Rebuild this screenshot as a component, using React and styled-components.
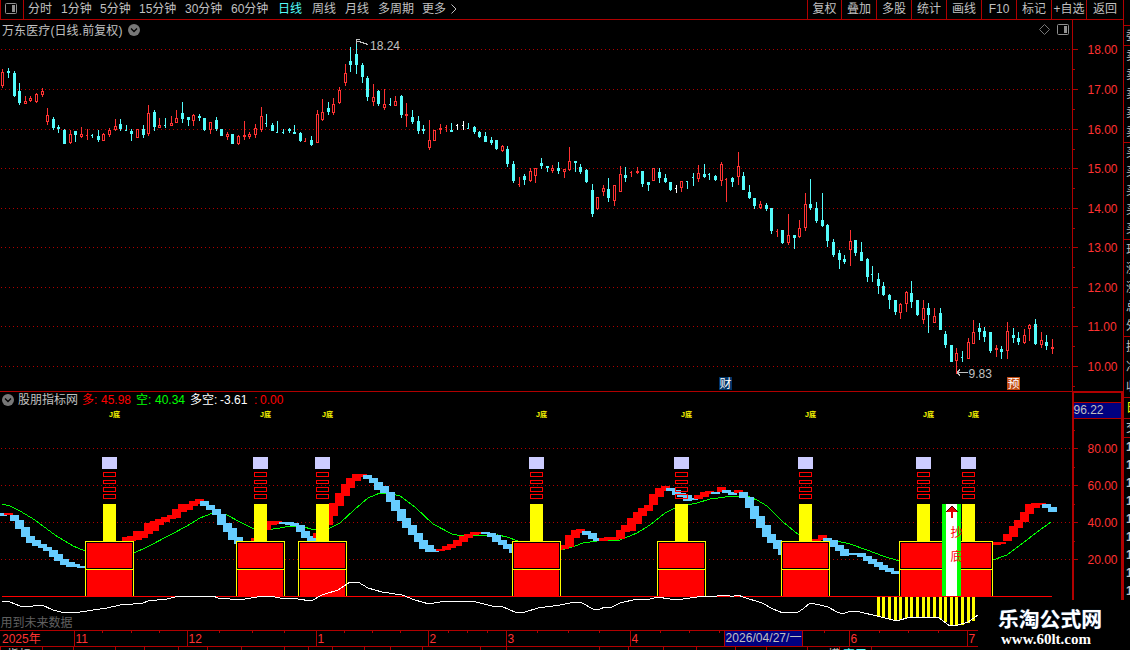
import React from "react";
import styled, { createGlobalStyle } from "styled-components";

const colors = {
  line: "#b00000",
  red: "#ff3232",
  cyan: "#54fcfc",
  text: "#c0c0c0",
  pureRed: "#ff0000",
  green: "#00ff00",
  yellow: "#ffff00",
  sky: "#66ccff",
  navy: "#000080",
};

const periods = [
  ["分时", 33],
  ["1分钟", 39],
  ["5分钟", 39],
  ["15分钟", 46],
  ["30分钟", 46],
  ["60分钟", 47],
  ["日线", 34],
  ["周线", 33],
  ["月线", 33],
  ["多周期", 44],
  ["更多", 29],
];

const actions = [
  ["复权", 34],
  ["叠加", 35],
  ["多股", 35],
  ["统计", 35],
  ["画线", 35],
  ["F10", 35],
  ["标记", 35],
  ["+自选", 35],
  ["返回", 37],
];

// type, high, low, body top, body bottom
const candles = `r69,88,72,86 c68,78,71,73 c71,97,73,96 c83,105,91,103 r96,104,101,104 r96,102,98,101
r93,103,94,102 r88,97,91,95 r108,125,115,122 c117,130,119,128 c125,133,127,129 c129,144,130,144
r130,144,134,143 c131,142,131,135 r127,138,134,137 r129,140,135,136 c134,138,135,136 c130,142,136,140
r133,141,134,141 r128,137,130,135 r119,131,126,130 c119,131,124,129 c125,131,130,131 c129,141,131,134
r129,138,129,138 c125,138,129,135 r105,136,113,134 c110,131,112,127 r118,128,125,128 c118,128,125,126
r116,126,123,126 r110,123,118,123 c102,123,113,119 c117,126,117,120 r114,126,115,121 c114,121,116,118
c118,131,118,130 r122,134,122,130 c117,131,120,129 c129,136,129,136 r132,140,134,137 c134,144,134,144
r135,145,136,144 r121,140,135,137 r132,139,134,137 r124,138,128,135 r107,132,116,130 c114,127,123,124
c123,131,125,131 c121,133,132,133 c129,134,132,133 c128,133,129,131 c125,134,132,134 c132,142,133,141
r138,142,141,142 c136,146,140,145 r110,143,114,143 r99,121,112,120 c102,115,108,112 r98,115,104,113
r87,104,90,103 r64,86,73,83 c47,72,61,65 c40,74,54,65 c63,83,65,77 c76,101,78,97
r84,106,97,102 c90,106,91,104 r89,110,104,108 c98,106,104,105 r96,106,101,106 c95,118,96,115
r103,127,114,116 c110,124,117,122 c116,134,121,131 c125,134,129,131 r120,150,140,148 r130,141,130,141
r124,134,128,130 r125,132,127,128 c123,132,130,132 w124,130,125,126 w121,130,125,126 c123,129,128,129
c126,134,127,132 c131,138,132,137 c132,142,136,142 c137,145,140,143 c140,150,140,149 r145,152,146,151
c146,167,149,164 c161,183,164,181 r177,187,184,185 c174,185,176,180 r168,182,171,181 r168,183,168,176
c158,169,163,166 c166,172,166,168 r165,173,168,171 c162,174,168,171 r169,178,169,172 r147,171,161,170
c161,172,161,163 c164,174,167,172 c169,183,170,182 c184,217,190,214 r197,210,197,209 r185,196,188,192
c178,202,189,198 r185,206,185,201 r166,192,174,192 c167,182,175,178 r171,177,172,173 r167,174,171,173
c171,187,171,184 c182,191,182,185 r168,181,168,181 c168,183,172,178 c174,183,178,182 c182,191,182,190
w185,193,188,189 r181,192,181,188 c181,189,181,182 c173,186,177,178 r165,182,173,179 c164,178,174,177
c173,180,174,175 c175,181,176,180 r162,186,164,181 r178,202,179,180 c177,187,178,182 r152,185,166,177
c172,190,176,190 c185,199,192,198 c198,209,198,206 r201,209,204,208 c203,211,205,209 c208,234,208,231
r229,237,231,232 c230,244,230,243 r214,245,235,243 c235,249,235,238 r220,238,228,237 r193,231,204,228
c179,210,204,208 c202,223,208,221 c193,227,220,226 c224,247,225,241 c239,257,242,255 c250,269,253,260
c255,264,259,262 r230,266,241,250 c240,256,240,253 c242,261,252,261 c258,282,259,277 c266,282,274,275
c273,294,279,286 c282,296,286,295 c294,309,295,300 c300,315,300,312 r303,319,304,313 r291,312,292,304
c281,308,293,302 c300,316,300,315 r300,324,308,320 c303,333,308,315 r308,323,316,323 c308,330,313,330
c331,348,334,345 c345,362,345,362 r348,374,353,361 c351,362,357,358 r338,359,342,359 r320,344,332,344
c323,340,328,332 c327,342,331,337 c332,353,332,351 r345,357,348,350 c346,359,349,352 r322,359,331,351
c328,343,335,338 c332,345,338,342 r329,344,335,343 r324,341,325,329 c319,345,324,344 r332,348,340,345
c335,350,342,346 r339,354,347,349`
  .split(/\s+/)
  .map((item) => [item[0], ...item.slice(1).split(",").map(Number)]);

// runs of the 多 ribbon: first bar index, then type + top-bottom per bar
const ribbonRuns = [
  [0, "b513-516 r513-515 b515-521 b520-529 b527-537 b536-543 b540-546 b544-548 b547-551 b550-557 b554-561 b559-565 b562-567 b564-567 b566-568"],
  [22, "r537-541 r536-541 r531-540 r531-538 r523-534 r521-531 r519-525 r517-522 r515-519 r509-518 r504-512 r504-510 r501-506 r499-504 b501-506 b505-510 b509-515 b514-525 b523-532 b528-540 b537-544"],
  [45, "r538-541 r529-539 r521-530 r521-525 r521-524 b522-524 b522-525 b523-526 b525-532 b531-538 b536-541 r533-538 r525-534 r516-525 r503-516 r493-506 r484-496 r478-488 r474-481 r474-477 b475-479 b478-483 b482-490 b486-493 b492-502 b500-511 b509-521 b518-528 b525-535 b533-542 b540-549 b545-552 b549-552"],
  [78, "r549-551 r546-550 r544-548 r540-546 r536-542 r534-538 r532-535 r532-534 b532-534 b533-537 b535-542 b540-545 b544-549 b548-553"],
  [99, "r546-550 r545-549 r535-547 r530-538 r529-533 b531-535 b533-539 b538-541 r538-541 r537-540 r537-540 r530-539 r525-532 r518-531 r512-524 r508-516 r505-511 r494-505 r488-497 r486-491 b488-491 b490-495 b493-497 b495-501 b498-500 r495-499 r492-497 r491-494 b492-494 r487-492 b490-493 b492-495 r490-493 b492-498 b497-508 b506-519 b516-528 b525-537 b534-543 b540-549 b547-555"],
  [145, "r539-541 r535-540 b538-542 b540-547 b545-551 b549-556 b553-555 b553-555 b553-557 b556-561 b559-564 b562-567 b565-570 b568-572 b571-574"],
  [177, "r542-545 r542-544 r534-541 r526-537 r520-528 r512-522 r504-514 r503-508 r503-505 b504-508 b507-512"],
];

const greenLines = [
  "2,504 10,506 20,511 35,520 55,535 73,546 85,551",
  "134,553 147,547 170,535 187,526 200,518 213,513 227,515 240,522 252,528 267,530 280,528 290,526 300,526 315,530 328,529 340,523 355,509 368,498 380,493 392,494 400,496 415,507 433,524 452,534 462,536 498,535 507,537 518,541",
  "562,550 575,546 583,543 597,541 620,540 637,533 650,525 665,513 677,507 697,503 710,499 733,496 747,496 757,500 767,506 783,522 799,535 810,541 837,541 850,544 867,550 883,556 899,561",
  "993,560 1007,555 1023,543 1037,532 1051,522",
];

const spreadLines = [
  "2,601 10,602 20,606 33,606 42,605 53,610 65,613 80,612 107,608 120,605 133,604 143,603 148,601 167,599 175,597 191,596 213,596 218,598 230,599 245,599 257,597 262,596 270,596 280,598 298,599 311,601 322,595 338,590 350,582 358,582 368,588 382,592 402,595 415,600 429,604 445,601 472,601 492,606 503,607 515,612 525,612 538,608 560,605 575,602 582,603 593,609 600,609 605,607 610,608 620,603 637,599 647,600 657,597 670,599 683,599 697,597 717,596 723,595 730,596 734,596 738,595 743,597 762,603 773,609 783,613 798,612 803,609 810,603 820,605 828,607 837,612 843,614 850,611 860,612 877,616 897,621 910,617 920,618 938,617 950,626 958,625 968,622 978,615",
];

const signals = [109, 260, 322, 536, 681, 805, 923, 968];

// bottoms of the yellow comb under the zero line
const comb = [617, 618, 619, 621, 620, 618, 617, 618, 618, 618, 618, 619, 622, 625, 626, 625, 623, 621];

const priceLevels = [
  ["18.00", 49],
  ["17.00", 89],
  ["16.00", 129],
  ["15.00", 168],
  ["14.00", 208],
  ["13.00", 247],
  ["12.00", 287],
  ["11.00", 326],
  ["10.00", 366],
];

const indicatorLevels = [
  ["80.00", 448],
  ["60.00", 485],
  ["40.00", 522],
  ["20.00", 559],
];

const months = [
  ["2025年", 0],
  ["11", 74],
  ["12", 187],
  ["1", 316],
  ["2", 428],
  ["3", 506],
  ["4", 630],
  ["6", 849],
  ["7", 967],
];

const monthTicks = [102, 131, 159, 219, 252, 284, 344, 372, 400, 448, 467, 487, 537, 568, 599, 660, 689, 719, 824, 879, 908, 938];
const footerTicks = [0, 42, 73, 115, 144, 178, 207, 241, 284, 308, 332, 364, 390, 422, 480, 506, 599, 628, 663, 696, 735, 766, 807, 839, 871];

const quoteGroups = [
  [20, ["委"]],
  [97, ["卖", "卖", "卖", "卖", "卖"]],
  [97, ["买", "买", "买", "买", "买"]],
  [97, ["现", "涨", "涨", "总", "外"]],
  [61, ["换", "净", "收"]],
];

const barX = (index) => Math.round(2.35 + index * 5.612);

const Candle = ({ index, data }) => {
  const [type, high, low, top, bottom] = data;
  const x = barX(index);
  const fill = { r: colors.red, c: colors.cyan, w: "#ffffff" }[type];
  const height = bottom - top;

  if (type === "r" && height > 2) {
    return (
      <g>
        <rect x={x} y={high} width={1} height={low - high} fill={fill} />
        <rect x={x - 1} y={top} width={3} height={height} fill={fill} />
        <rect x={x} y={top + 1} width={1} height={height - 2} fill="#000" />
      </g>
    );
  }

  return (
    <g fill={fill}>
      <rect x={x} y={high} width={1} height={low - high} />
      <rect x={x - 1} y={top} width={height === 1 ? 2 : 3} height={height} />
    </g>
  );
};

const GridLines = ({ levels }) =>
  levels.map(([label, y]) => (
    <line
      key={label}
      x1={1}
      x2={1072}
      y1={y + 0.5}
      y2={y + 0.5}
      stroke={colors.line}
      strokeDasharray="1 3"
    />
  ));

const PriceChart = () => (
  <Plot width={1072} height={351} viewBox="0 40 1072 351">
    <GridLines levels={priceLevels} />
    {candles.map((data, index) => (
      <Candle key={index} index={index} data={data} />
    ))}
    <g stroke={colors.text} fill="none">
      <path d="M356.5 44V39.5H360 M357 41.5H359 L362 42.5L368 44.5" />
      <path d="M957 372.5H968 M957 372.5L960 369.5 M957 372.5L960 375.5" />
    </g>
    <ChartText x={370} y={50}>18.24</ChartText>
    <ChartText x={968.5} y={378}>9.83</ChartText>
    <rect x={719} y={377} width={13} height={13} fill="#003366" />
    <rect x={1007} y={377} width={13} height={13} fill="#c04a10" />
    <ChartText x={719.5} y={388} $color="#ffffff">财</ChartText>
    <ChartText x={1007.5} y={388} $color="#ffffff">预</ChartText>
  </Plot>
);

const Signal = ({ x }) => (
  <g>
    <rect x={x - 7} y={457} width={15} height={12} fill="#ccccff" />
    {[472, 480, 487, 494].map((y) => (
      <rect
        key={y}
        x={x - 5.5}
        y={y + 0.5}
        width={12}
        height={y === 480 ? 3 : 4}
        fill="none"
        stroke={colors.pureRed}
      />
    ))}
    <rect x={x - 6} y={504} width={13} height={37} fill={colors.yellow} />
  </g>
);

const SignalBox = ({ x, width = 49 }) => (
  <g>
    <rect x={x} y={541} width={width} height={55} fill={colors.yellow} />
    <rect x={x + 1} y={542} width={width - 2} height={54} fill="#000" />
    <rect x={x + 2} y={543} width={width - 4} height={53} fill={colors.pureRed} />
    <rect x={x + 1} y={568} width={width - 2} height={2} fill="#000" />
    <rect x={x} y={569} width={width} height={1} fill={colors.yellow} />
  </g>
);

const IndicatorChart = () => (
  <Plot width={1072} height={222} viewBox="0 408 1072 222">
    <GridLines levels={indicatorLevels} />
    {greenLines.map((points) => (
      <polyline key={points} points={points} fill="none" stroke={colors.green} />
    ))}
    {ribbonRuns.map(([start, run]) =>
      run.split(" ").map((bar, offset) => {
        const [top, bottom] = bar.slice(1).split("-").map(Number);
        return (
          <rect
            key={start + offset}
            x={barX(start + offset) - 4}
            y={top}
            width={9}
            height={bottom - top}
            fill={bar[0] === "r" ? colors.pureRed : colors.sky}
          />
        );
      })
    )}
    {signals.map((x) => (
      <Signal key={x} x={x} />
    ))}
    {signals.slice(0, 6).map((x) => (
      <SignalBox key={x} x={x - 24} />
    ))}
    <SignalBox x={899} width={94} />
    {signals.map((x) => (
      <SignalLabel key={x} x={x} y={417} textLength={11} lengthAdjust="spacingAndGlyphs">
        J底
      </SignalLabel>
    ))}

    <rect x={942} y={504} width={19} height={92} fill={colors.green} />
    <rect x={946} y={504} width={11} height={92} fill="#ffffff" />
    <path d="M952 505L958 512H946Z" fill="#400000" />
    <path d="M952 506L957 512H953V518H951V512H947Z" fill="#e00000" />
    <ChartText x={950.5} y={537} $color={colors.pureRed}>抄</ChartText>
    <ChartText x={950.5} y={561} $color={colors.pureRed}>底</ChartText>

    {comb.map((bottom, index) => (
      <rect
        key={index}
        x={barX(156 + index) - 1}
        y={597}
        width={3}
        height={bottom - 597}
        fill={colors.yellow}
      />
    ))}
    <rect x={2} y={596} width={1050} height={1} fill={colors.pureRed} />
    {spreadLines.map((points) => (
      <polyline key={points} points={points} fill="none" stroke="#ffffff" />
    ))}
    <ChartText x={0.5} y={627} $color="#606060">用到未来数据</ChartText>
  </Plot>
);

const AxisLabels = ({ levels, step }) =>
  levels.map(([label, y]) => (
    <g key={label}>
      <rect x={0} y={y} width={6} height={1} fill={colors.line} />
      <rect x={0} y={y + step} width={3} height={1} fill={colors.line} />
      <ChartText x={15.5} y={y + 5} $color={colors.red}>
        {label}
      </ChartText>
    </g>
  ));

const PanelIcon = () => (
  <svg width={12} height={11} viewBox="0 0 12 11">
    <rect x={0.5} y={0.5} width={11} height={10} rx={1} fill="none" stroke="#909090" />
    <rect x={7} y={2} width={3} height={7} fill="#909090" />
  </svg>
);

const CollapseIcon = () => (
  <svg width={12} height={12} viewBox="0 0 12 12">
    <circle cx={6} cy={6} r={6} fill="#777777" />
    <path d="M3 4.5L6 7.5L9 4.5" fill="none" stroke="#000" strokeWidth={1.3} />
  </svg>
);

const App = () => {
  return (
    <>
      <GlobalStyle />
      <Terminal>
        <Toolbar>
          <PanelToggle>
            <PanelIcon />
          </PanelToggle>
          <PeriodList>
            {periods.map(([label, width]) => (
              <Period key={label} $width={width} $active={label === "日线"}>
                {label}
              </Period>
            ))}
            <MoreIcon width={6} height={10} viewBox="0 0 6 10">
              <path d="M0.5 0.5L5 5L0.5 9.5" fill="none" stroke={colors.text} />
            </MoreIcon>
          </PeriodList>
          <ActionList>
            {actions.map(([label, width]) => (
              <Action key={label} $width={width}>
                {label}
              </Action>
            ))}
          </ActionList>
        </Toolbar>

        <Workspace>
          <ChartColumn>
            <ChartHeader>
              <ChartTitle>万东医疗(日线.前复权)</ChartTitle>
              <CollapseIcon />
              <HeaderTools>
                <svg width={11} height={11} viewBox="0 0 11 11">
                  <path d="M5.5 0.5L10.5 5.5L5.5 10.5L0.5 5.5Z" fill="none" stroke="#777777" />
                </svg>
                <PanelIcon />
              </HeaderTools>
            </ChartHeader>
            <PriceChart />
            <IndicatorHeader>
              <CollapseIcon />
              <Legend $width={64} $color={colors.text}>股朋指标网</Legend>
              <Legend $width={19} $color={colors.pureRed}>多:</Legend>
              <Legend $width={35} $color={colors.pureRed}>45.98</Legend>
              <Legend $width={19} $color={colors.green}>空:</Legend>
              <Legend $width={35} $color={colors.green}>40.34</Legend>
              <Legend $width={30} $color="#ffffff">多空:</Legend>
              <Legend $width={34} $color="#ffffff">-3.61</Legend>
              <Legend $width={6} $color={colors.pureRed}>:</Legend>
              <Legend $width={30} $color={colors.pureRed}>0.00</Legend>
            </IndicatorHeader>
            <IndicatorChart />
            <Plot width={1072} height={20} viewBox="0 630 1072 20">
              <rect x={0} y={630} width={978} height={1} fill={colors.line} />
              <rect x={0} y={646} width={978} height={1} fill={colors.line} />
              {monthTicks.map((x) => (
                <rect key={x} x={x} y={631} width={1} height={2} fill={colors.line} />
              ))}
              {footerTicks.map((x) => (
                <rect key={x} x={x} y={647} width={1} height={3} fill={colors.line} />
              ))}
              {months.map(([label, x]) => (
                <g key={label}>
                  {x > 0 && <rect x={x} y={631} width={1} height={15} fill={colors.line} />}
                  <ChartText x={x > 0 ? x + 1.5 : 2} y={643} $color={colors.red}>
                    {label}
                  </ChartText>
                </g>
              ))}
              <rect x={724} y={631} width={79} height={15} fill={colors.navy} />
              <rect x={724} y={631} width={1} height={15} fill={colors.line} />
              <rect x={802} y={631} width={1} height={15} fill={colors.line} />
              <ChartText x={725.5} y={642} textLength={76}>2026/04/27/一</ChartText>
              <ChartText x={7} y={659}>指标</ChartText>
              <ChartText x={828} y={659}>模</ChartText>
              <ChartText x={843} y={659} $color={colors.cyan}>窗口</ChartText>
            </Plot>
          </ChartColumn>

          <AxisColumn>
            <Plot width={51} height={580} viewBox="0 20 51 580">
              <rect x={0} y={20} width={1} height={580} fill={colors.line} />
              <AxisLabels levels={priceLevels} step={20} />
              <rect x={0} y={391} width={51} height={2} fill={colors.line} />
              <rect x={0} y={391} width={2} height={209} fill={colors.line} />
              <rect x={49} y={391} width={2} height={209} fill={colors.line} />
              <rect x={2} y={402} width={47} height={1} fill={colors.line} />
              <rect x={2} y={403} width={47} height={15} fill={colors.navy} />
              <rect x={2} y={418} width={47} height={1} fill={colors.line} />
              <ChartText x={1.5} y={414}>96.22</ChartText>
              <AxisLabels levels={indicatorLevels} step={-18} />
            </Plot>
          </AxisColumn>

          <QuoteStrip>
            {quoteGroups.map(([height, labels], index) => (
              <QuoteGroup key={index} $height={height}>
                {labels.map((label, row) => (
                  <span key={row}>{label}</span>
                ))}
              </QuoteGroup>
            ))}
            <QuoteGroup $height={21} $color={colors.yellow}>
              <span>日</span>
            </QuoteGroup>
            <QuoteGroup $height={19}>
              <span>交</span>
            </QuoteGroup>
            <QuoteGroup $height={163} $bold>
              {Array.from({ length: 9 }, (_, index) => (
                <span key={index}>1</span>
              ))}
            </QuoteGroup>
          </QuoteStrip>
        </Workspace>

        <Watermark>
          <WatermarkName>乐淘公式网</WatermarkName>
          <WatermarkLink>www.60lt.com</WatermarkLink>
        </Watermark>
      </Terminal>
    </>
  );
};

export default App;

const GlobalStyle = createGlobalStyle`
  * {
    box-sizing: border-box;
  }

  body {
    margin: 0;
    background: #000;
    overflow: hidden;
    font-family: "Liberation Sans", "Noto Sans CJK SC", sans-serif;
    font-size: 12px;
    color: ${colors.text};
  }
`;

const Terminal = styled.div`
  position: relative;
  display: grid;
  grid-template-rows: 20px 630px;
  width: 1130px;
  height: 650px;
  overflow: hidden;
  background: #000;
`;

const Toolbar = styled.div`
  display: flex;
  width: 1124px;
  border-bottom: 1px solid ${colors.line};
  line-height: 19px;
`;

const PanelToggle = styled.div`
  display: flex;
  align-items: center;
  justify-content: center;
  width: 24px;
  padding: 0 2px 2px 0;
  border: solid ${colors.line};
  border-width: 0 1px;
`;

const PeriodList = styled.div`
  display: flex;
  align-items: center;
  padding-left: 4px;
`;

const Period = styled.span`
  width: ${({ $width }) => $width}px;
  color: ${({ $active }) => ($active ? colors.cyan : "inherit")};
  white-space: nowrap;
`;

const MoreIcon = styled.svg`
  margin-bottom: 2px;
`;

const ActionList = styled.div`
  display: flex;
  margin-left: auto;
  border-right: 1px solid ${colors.line};
`;

const Action = styled.div`
  width: ${({ $width }) => $width}px;
  border-left: 1px solid ${colors.line};
  text-align: center;
  white-space: nowrap;
`;

const Workspace = styled.div`
  display: flex;
`;

const ChartColumn = styled.div`
  display: flex;
  flex-direction: column;
  width: 1072px;
`;

const Plot = styled.svg`
  display: block;
  flex-shrink: 0;
  overflow: visible;
  shape-rendering: crispEdges;
`;

const ChartText = styled.text`
  font-size: 12px;
  fill: ${({ $color }) => $color || colors.text};
`;

const SignalLabel = styled.text`
  font-size: 7px;
  font-weight: 700;
  fill: ${colors.yellow};
`;

const ChartHeader = styled.div`
  display: flex;
  align-items: center;
  height: 20px;
  padding: 0 3px 1px 2px;
`;

const ChartTitle = styled.span`
  width: 126px;
  padding-bottom: 1px;
  letter-spacing: 0.1px;
  white-space: nowrap;
`;

const HeaderTools = styled.div`
  display: flex;
  align-items: center;
  gap: 7px;
  margin-left: auto;
`;

const IndicatorHeader = styled.div`
  display: flex;
  align-items: center;
  height: 17px;
  padding-left: 2px;
  border-top: 1px solid ${colors.line};

  svg {
    margin-right: 4px;
  }
`;

const Legend = styled.span`
  width: ${({ $width }) => $width}px;
  color: ${({ $color }) => $color};
  line-height: 16px;
  white-space: nowrap;
`;

const AxisColumn = styled.div`
  width: 51px;
`;

const QuoteStrip = styled.div`
  width: 7px;
  height: 580px;
  padding-top: 5px;
  overflow: hidden;
  border-left: 1px solid ${colors.line};
`;

const QuoteGroup = styled.div`
  display: flex;
  flex-direction: column;
  justify-content: space-around;
  height: ${({ $height }) => $height}px;
  padding-left: 2px;
  border-top: 1px solid ${colors.line};
  color: ${({ $color }) => $color || colors.text};
  font-weight: ${({ $bold }) => ($bold ? 700 : 400)};
  line-height: 14px;
`;

const Watermark = styled.div`
  position: absolute;
  right: 0;
  bottom: 0;
  display: flex;
  flex-direction: column;
  width: 152px;
  height: 50px;
  padding: 6px 0 0 20px;
  background: #000;
  color: #fff;
`;

const WatermarkName = styled.strong`
  font-family: "Noto Sans CJK SC", sans-serif;
  font-size: 20.8px;
  line-height: 24px;
  text-shadow: 0 0 1px #3a6ea5;
`;

const WatermarkLink = styled.strong`
  padding-left: 3px;
  font-family: "Liberation Serif", serif;
  font-size: 15px;
  line-height: 18px;
`;
